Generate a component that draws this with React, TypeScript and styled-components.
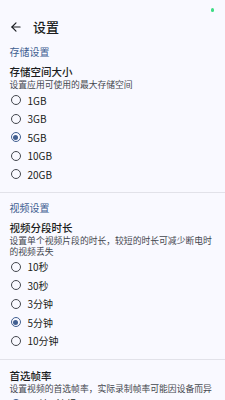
import React, { useState } from 'react';
import styled, { createGlobalStyle } from 'styled-components';
import { ArrowLeft } from 'lucide-react';

const colors = {
  bg: '#f9f9ff',
  text: '#1a1c20',
  lightText: '#44474e',
  primary: '#415f91',
  border: '#e2e2e9',
};

const GlobalStyle = createGlobalStyle`
  html, body {
    margin: 0;
    padding: 0;
    background: ${colors.bg};
    font-family: "Noto Sans CJK SC", "Noto Sans", Roboto, sans-serif;
    color: ${colors.text};
  }
  body { width: 225px; height: 400px; overflow: hidden; }
`;

const Page = styled.div`
  display: flex;
  flex-direction: column;
`;

const StatusBar = styled.div`
  height: 20px;
  display: flex;
  align-items: center;
  justify-content: flex-end;
  padding-right: 11px;
`;

const Dot = styled.span`
  width: 3.5px;
  height: 3.5px;
  border-radius: 50%;
  background: #3ddc84;
`;

const Header = styled.div`
  height: 14px;
  display: flex;
  align-items: center;
  gap: 10px;
  padding-left: 9px;
`;

const Title = styled.div`
  font-size: 13px;
  line-height: 14px;
  font-weight: 500;
`;

const Content = styled.div`
  display: flex;
  flex-direction: column;
`;

const Block = styled.div`
  padding: 0 10px 0 9.5px;
  display: flex;
  flex-direction: column;
`;

const SectionLabel = styled.div<{ $afterDivider?: boolean }>`
  font-size: 10px;
  line-height: 14px;
  color: ${colors.primary};
  margin-top: ${({ $afterDivider }) => ($afterDivider ? '8px' : '11px')};
`;

const ItemTitle = styled.div<{ $first?: boolean }>`
  font-size: 10.5px;
  line-height: 13px;
  font-weight: 500;
  margin-top: ${({ $first }) => ($first ? '6px' : '9px')};
`;

const ItemDesc = styled.div`
  font-size: 8.8px;
  line-height: 10.5px;
  color: ${colors.lightText};
  margin-top: 2px;
`;

const Options = styled.div`
  display: flex;
  flex-direction: column;
  margin-top: 0.5px;
`;

const Option = styled.label`
  height: 18.5px;
  display: flex;
  align-items: center;
  gap: 7px;
  padding-left: 1px;
  font-size: 10px;
  color: ${colors.text};
  cursor: pointer;
`;

const Circle = styled.span<{ $checked: boolean }>`
  width: 10px;
  height: 10px;
  box-sizing: border-box;
  border-radius: 50%;
  border: 1.3px solid ${({ $checked }) => ($checked ? colors.primary : colors.lightText)};
  display: flex;
  align-items: center;
  justify-content: center;
  &::after {
    content: '';
    width: 5px;
    height: 5px;
    border-radius: 50%;
    background: ${colors.primary};
    display: ${({ $checked }) => ($checked ? 'block' : 'none')};
  }
`;

const Divider = styled.div`
  height: 1px;
  background: ${colors.border};
  margin-top: 8.5px;
`;

interface RadioGroupProps {
  options: string[];
  initial: string;
}

const RadioGroup: React.FC<RadioGroupProps> = ({ options, initial }) => {
  const [value, setValue] = useState(initial);
  return (
    <Options>
      {options.map(o => (
        <Option key={o} onClick={() => setValue(o)}>
          <Circle $checked={value === o} />
          {o}
        </Option>
      ))}
    </Options>
  );
};

export default function App() {
  return (
    <Page>
      <GlobalStyle />
      <StatusBar><Dot /></StatusBar>
      <Header>
        <ArrowLeft size={14} strokeWidth={2} color={colors.text} />
        <Title>设置</Title>
      </Header>
      <Content>
        <Block>
          <SectionLabel>存储设置</SectionLabel>
          <ItemTitle $first>存储空间大小</ItemTitle>
          <ItemDesc>设置应用可使用的最大存储空间</ItemDesc>
          <RadioGroup options={['1GB', '3GB', '5GB', '10GB', '20GB']} initial="5GB" />
        </Block>
        <Divider />
        <Block>
          <SectionLabel $afterDivider>视频设置</SectionLabel>
          <ItemTitle $first>视频分段时长</ItemTitle>
          <ItemDesc>设置单个视频片段的时长，较短的时长可减少断电时的视频丢失</ItemDesc>
          <RadioGroup options={['10秒', '30秒', '3分钟', '5分钟', '10分钟']} initial="5分钟" />
        </Block>
        <Divider />
        <Block>
          <ItemTitle>首选帧率</ItemTitle>
          <ItemDesc>设置视频的首选帧率，实际录制帧率可能因设备而异</ItemDesc>
          <RadioGroup options={['30帧 - 流畅', '60帧 - 高清']} initial="30帧 - 流畅" />
        </Block>
      </Content>
    </Page>
  );
}
